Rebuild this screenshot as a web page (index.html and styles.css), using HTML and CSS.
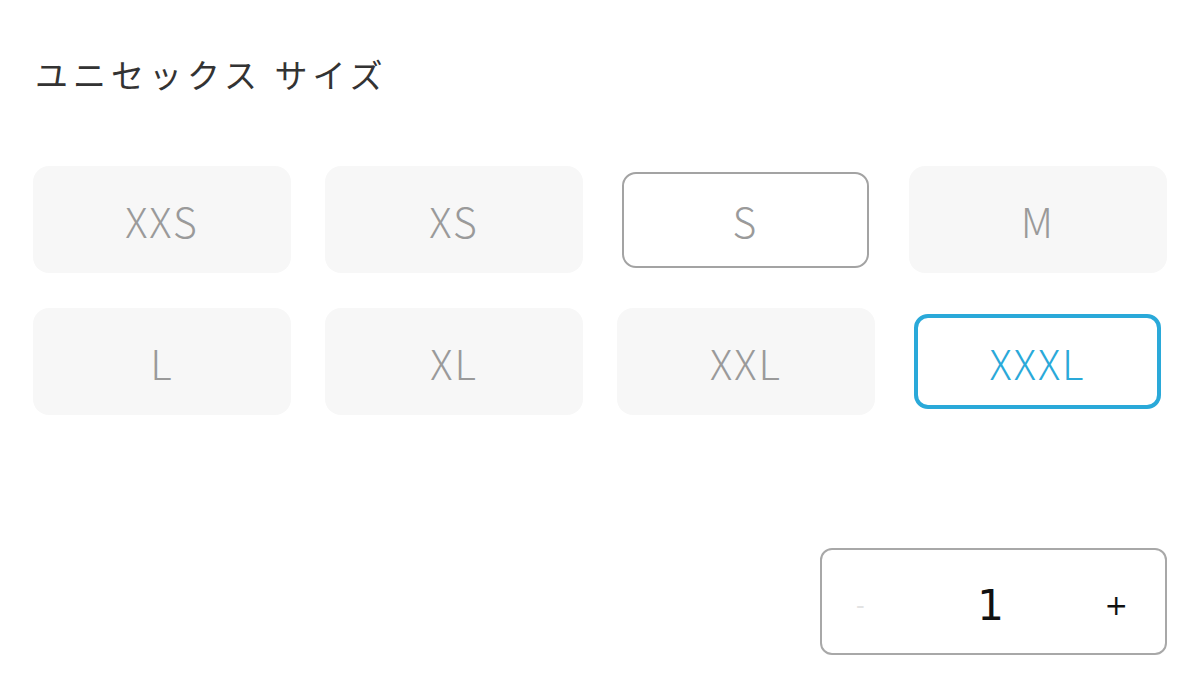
FILE: index.html
```html
<!DOCTYPE html>
<html lang="ja">
<head>
<meta charset="utf-8">
<link rel="stylesheet" href="styles.css">
</head>
<body>
<div class="page">
  <h2 class="title">ユニセックス サイズ</h2>
  <div class="sizes">
    <div class="size">XXS</div>
    <div class="size">XS</div>
    <div class="size outlined">S</div>
    <div class="size">M</div>
    <div class="size">L</div>
    <div class="size">XL</div>
    <div class="size">XXL</div>
    <div class="size selected">XXXL</div>
  </div>
  <div class="qty-row">
    <div class="stepper">
      <span class="minus">-</span>
      <span class="value">1</span>
      <span class="plus">+</span>
    </div>
  </div>
</div>
</body>
</html>
```
FILE: styles.css
```css
html, body {
  margin: 0;
  padding: 0;
  background: #fff;
}
.page {
  padding: 50px 33px 0 33px;
  font-family: "Noto Sans CJK JP", sans-serif;
}
.title {
  margin: 0 0 0 2px;
  font-family: "Noto Sans CJK JP", sans-serif;
  font-weight: 400;
  font-size: 33px;
  line-height: 48px;
  color: #333;
  letter-spacing: 5px;
}
.sizes {
  margin-top: 68px;
  display: grid;
  grid-template-columns: repeat(4, 258px);
  grid-auto-rows: 107px;
  column-gap: 34px;
  row-gap: 35px;
}
.size {
  display: flex;
  align-items: center;
  justify-content: center;
  background: #f7f7f7;
  border-radius: 16px;
  color: #9a9a9a;
  font-size: 41px;
  font-weight: 300;
  letter-spacing: 2px;
}
.size.outlined {
  margin: 6px 6px 5px 5px;
  background: #fff;
  border: 2px solid #a3a3a3;
  border-radius: 14px;
}
.size.selected {
  margin: 6px 6px 6px 5px;
  background: #fff;
  border: 4px solid #2aa9d9;
  border-radius: 14px;
  color: #2aa9d9;
}
.qty-row {
  display: flex;
  justify-content: flex-end;
  margin-top: 133px;
}
.stepper {
  width: 347px;
  height: 107px;
  box-sizing: border-box;
  border: 2px solid #a8a8a8;
  border-radius: 12px;
  display: flex;
  align-items: center;
  justify-content: space-between;
  padding: 8px 37px 0 34px;
  font-family: "DejaVu Sans", sans-serif;
}
.minus {
  color: #e3e3e3;
  font-size: 24px;
}
.value {
  color: #111;
  font-size: 42px;
  margin-left: 12px;
}
.plus {
  color: #111;
  font-size: 28px;
}
```
